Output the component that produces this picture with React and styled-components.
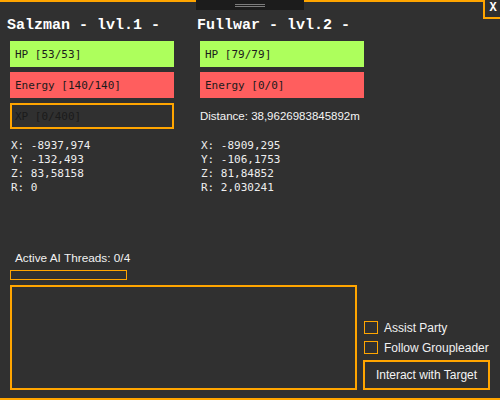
import { createGlobalStyle, styled } from 'styled-components';

const GlobalStyle = createGlobalStyle`
  body {
    margin: 0;
    background: #303030;
  }
  * {
    box-sizing: border-box;
  }
`;

const ORANGE = '#ffa500';

const Window = styled.div`
  position: relative;
  width: 500px;
  height: 400px;
  display: flex;
  flex-direction: column;
  background: #303030;
  border-bottom: 2px solid ${ORANGE};
  color: #f2f2f2;
  font-family: 'Liberation Sans', Arial, sans-serif;
  font-size: 12px;
  overflow: hidden;
`;

const TopBar = styled.div`
  display: flex;
  height: 10px;
`;

const TopLine = styled.div`
  flex: 1;
  height: 2px;
  background: ${ORANGE};
`;

const Grip = styled.div`
  width: 108px;
  height: 10px;
  background: #1c1c1c;
  display: flex;
  flex-direction: column;
  align-items: center;
  padding-top: 4px;
  gap: 1px;
`;

const GripLine = styled.div`
  width: 30px;
  height: 1px;
  background: #7c7c7c;
`;

const CloseButton = styled.button`
  position: absolute;
  top: 0;
  right: 0;
  width: 17px;
  height: 19px;
  padding: 0 0 0 1px;
  border: none;
  border-left: 2px solid ${ORANGE};
  border-bottom: 2px solid ${ORANGE};
  background: #303030;
  color: #fff;
  font-family: 'Liberation Mono', monospace;
  font-weight: bold;
  font-size: 12px;
  line-height: 17px;
  cursor: pointer;
`;

const Content = styled.div`
  flex: 1;
  display: flex;
  flex-direction: column;
  padding: 0 10px 8px 10px;
`;

const Units = styled.div`
  display: grid;
  grid-template-columns: 164px 164px;
  column-gap: 26px;
  row-gap: 5px;
  align-items: center;
`;

const Title = styled.div`
  margin: 7px 0 1px -3px;
  font-family: 'Liberation Mono', monospace;
  font-weight: bold;
  font-size: 15px;
  line-height: 18px;
  color: #fff;
  white-space: nowrap;
`;

const Bar = styled.div`
  height: 26px;
  display: flex;
  align-items: center;
  font-family: 'DejaVu Sans Mono', monospace;
  font-size: 11px;
  color: #1b1b1b;
  background: ${(p) => p.$color || 'transparent'};
  border: ${(p) => (p.$outlined ? `2px solid ${ORANGE}` : 'none')};
  padding-left: ${(p) => (p.$outlined ? '3px' : '5px')};
`;

const Distance = styled.div`
  line-height: 16px;
  font-size: 11.5px;
  color: #f4f4f4;
  white-space: nowrap;
`;

const Coords = styled.div`
  margin-top: 5px;
  padding-left: 1px;
  font-family: 'DejaVu Sans Mono', monospace;
  font-size: 11px;
  line-height: 14px;
  color: #eeeeee;
  white-space: pre;
`;

const Bottom = styled.div`
  margin-top: auto;
  display: flex;
  flex-direction: column;
`;

const Threads = styled.div`
  padding-left: 5px;
  line-height: 16px;
  font-size: 11.8px;
`;

const Progress = styled.div`
  margin-top: 4px;
  width: 117px;
  height: 10px;
  border: 1px solid ${ORANGE};
`;

const BottomRow = styled.div`
  margin-top: 5px;
  display: flex;
  height: 105px;
`;

const LogBox = styled.div`
  width: 347px;
  border: 2px solid ${ORANGE};
`;

const Side = styled.div`
  margin-left: 6px;
  display: flex;
  flex-direction: column;
  justify-content: flex-end;
`;

const CheckRow = styled.label`
  display: flex;
  align-items: center;
  gap: 6px;
  height: 13px;
  margin: 0 0 7px 1px;
  white-space: nowrap;
  cursor: pointer;
`;

const Box = styled.span`
  width: 14px;
  height: 13px;
  border: 1px solid ${ORANGE};
`;

const ActionButton = styled.button`
  width: 127px;
  height: 30px;
  margin-top: -1px;
  border: 2px solid ${ORANGE};
  background: transparent;
  color: #f4f4f4;
  font-family: 'Liberation Sans', Arial, sans-serif;
  font-size: 12px;
  cursor: pointer;
`;

const units = [
  {
    name: 'Salzman - lvl.1 -',
    hp: '53/53',
    energy: '140/140',
    extra: { type: 'xp', text: 'XP [0/400]' },
    pos: ['-8937,974', '-132,493', '83,58158', '0'],
  },
  {
    name: 'Fullwar - lvl.2 -',
    hp: '79/79',
    energy: '0/0',
    extra: { type: 'distance', text: 'Distance: 38,9626983845892m' },
    pos: ['-8909,295', '-106,1753', '81,84852', '2,030241'],
  },
];

function App() {
  return (
    <Window>
      <GlobalStyle />
      <TopBar>
        <TopLine />
        <Grip>
          <GripLine />
          <GripLine />
        </Grip>
        <TopLine />
      </TopBar>
      <CloseButton>X</CloseButton>
      <Content>
        <Units>
          {units.map((u) => (
            <Title key={u.name}>{u.name}</Title>
          ))}
          {units.map((u) => (
            <Bar key={u.name} $color="#adff5c">HP [{u.hp}]</Bar>
          ))}
          {units.map((u) => (
            <Bar key={u.name} $color="#ff5e5e">Energy [{u.energy}]</Bar>
          ))}
          {units.map((u) =>
            u.extra.type === 'xp' ? (
              <Bar key={u.name} $outlined>{u.extra.text}</Bar>
            ) : (
              <Distance key={u.name}>{u.extra.text}</Distance>
            )
          )}
          {units.map((u) => (
            <Coords key={u.name}>
              {`X: ${u.pos[0]}\nY: ${u.pos[1]}\nZ: ${u.pos[2]}\nR: ${u.pos[3]}`}
            </Coords>
          ))}
        </Units>
        <Bottom>
          <Threads>Active AI Threads: 0/4</Threads>
          <Progress />
          <BottomRow>
            <LogBox />
            <Side>
              <CheckRow>
                <Box />
                Assist Party
              </CheckRow>
              <CheckRow>
                <Box />
                Follow Groupleader
              </CheckRow>
              <ActionButton>Interact with Target</ActionButton>
            </Side>
          </BottomRow>
        </Bottom>
      </Content>
    </Window>
  );
}

export default App;
